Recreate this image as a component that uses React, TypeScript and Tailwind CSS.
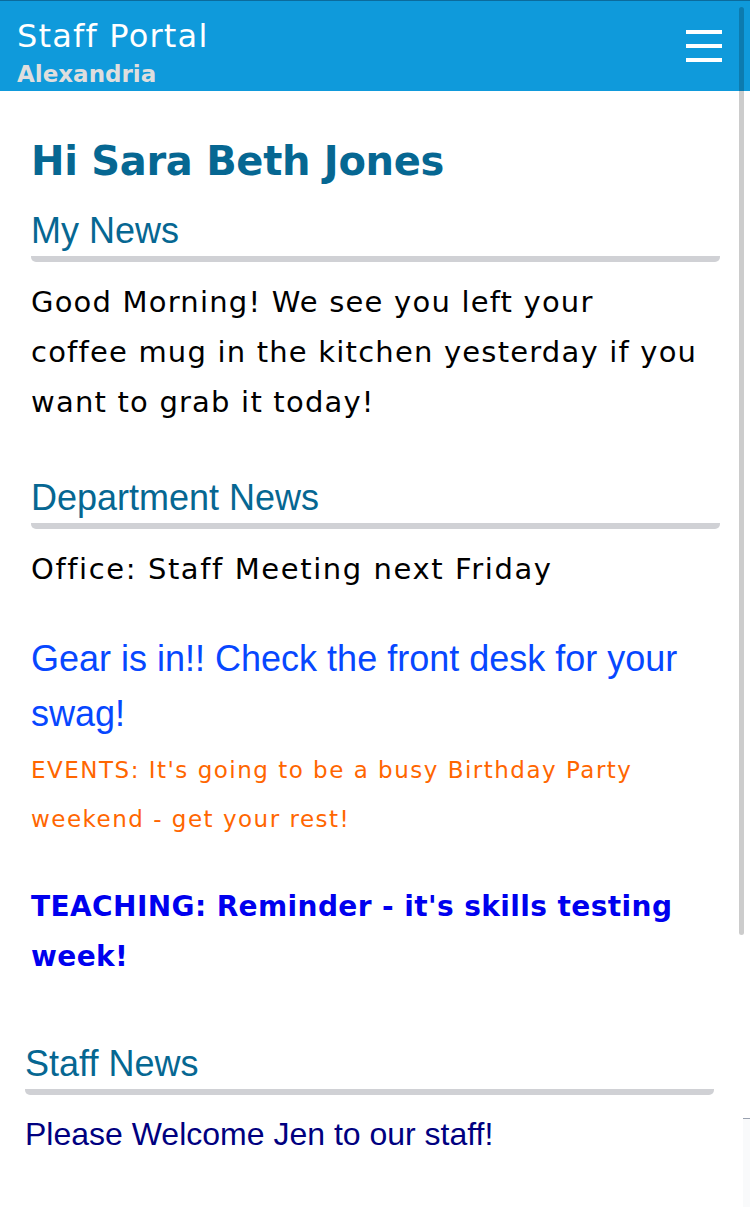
import React from 'react'

const mont = { fontFamily: '"DejaVu Sans", "Open Sans", sans-serif' }
const helv = { fontFamily: '"Liberation Sans", Arial, sans-serif' }

function SectionTitle({ children }: { children: React.ReactNode }) {
  return (
    <div className="border-b-[6px] border-[#d0d1d5] rounded-b-[5px] pb-[5px]">
      <h2 className="text-[36px] leading-[40px] text-[#066792]" style={helv}>
        {children}
      </h2>
    </div>
  )
}

export default function App() {
  return (
    <div className="relative min-h-[1207px] bg-white overflow-hidden">
      <header className="flex items-start justify-between h-[91px] bg-[#0f9adb] border-t border-[#0b6b9c] pl-[17px] pr-[28px]">
        <div className="pt-[16px]">
          <div className="text-[32px] leading-[38px] tracking-[1.2px] text-white" style={mont}>
            Staff Portal
          </div>
          <div className="mt-[5px] text-[23px] leading-[28px] font-bold text-[#dedede]" style={mont}>
            Alexandria
          </div>
        </div>
        <div className="flex flex-col gap-[10px] pt-[29px]">
          <span className="block w-[36px] h-[4px] bg-white" />
          <span className="block w-[36px] h-[4px] bg-white" />
          <span className="block w-[36px] h-[4px] bg-white" />
        </div>
      </header>

      <main className="pt-[46px]">
        <div className="ml-[31px] mr-[30px]">
          <h1 className="text-[40px] leading-[48px] font-bold text-[#066792] tracking-[-0.3px]" style={mont}>
            Hi Sara Beth Jones
          </h1>

          <div className="mt-[26px]">
            <SectionTitle>My News</SectionTitle>
            <p className="mt-[15px] text-[29px] leading-[50px] tracking-[1.2px] text-black" style={mont}>
              Good Morning! We see you left your
              <br />
              coffee mug in the kitchen yesterday if you
              <br />
              want to grab it today!
            </p>
          </div>

          <div className="mt-[51px]">
            <SectionTitle>Department News</SectionTitle>
            <p className="mt-[15px] text-[29px] leading-[50px] tracking-[1.6px] text-black" style={mont}>
              Office: Staff Meeting next Friday
            </p>
            <p className="mt-[37px] text-[36px] leading-[55px] text-[#0747ff]" style={helv}>
              Gear is in!! Check the front desk for your swag!
            </p>
            <p className="mt-[5px] text-[23px] leading-[49px] tracking-[1.5px] text-[#ff6600]" style={mont}>
              EVENTS: It's going to be a busy Birthday Party weekend - get your rest!
            </p>
            <p className="mt-[38px] text-[28px] leading-[50px] font-bold tracking-[0.4px] text-[#0000ee]" style={mont}>
              TEACHING: Reminder - it's skills testing week!
            </p>
          </div>
        </div>

        <div className="ml-[25px] mr-[36px] mt-[62px]">
          <SectionTitle>Staff News</SectionTitle>
          <p className="mt-[19px] text-[32px] leading-[40px] text-[#000080]" style={helv}>
            Please Welcome Jen to our staff!
          </p>
        </div>
      </main>

      <div className="absolute left-[739px] top-[7px] w-[5px] h-[928px] rounded-full bg-black/20" />
      <div className="absolute left-[743px] top-[1118px] w-[7px] bottom-0 bg-gray-50 border-t border-gray-400" />
    </div>
  )
}
